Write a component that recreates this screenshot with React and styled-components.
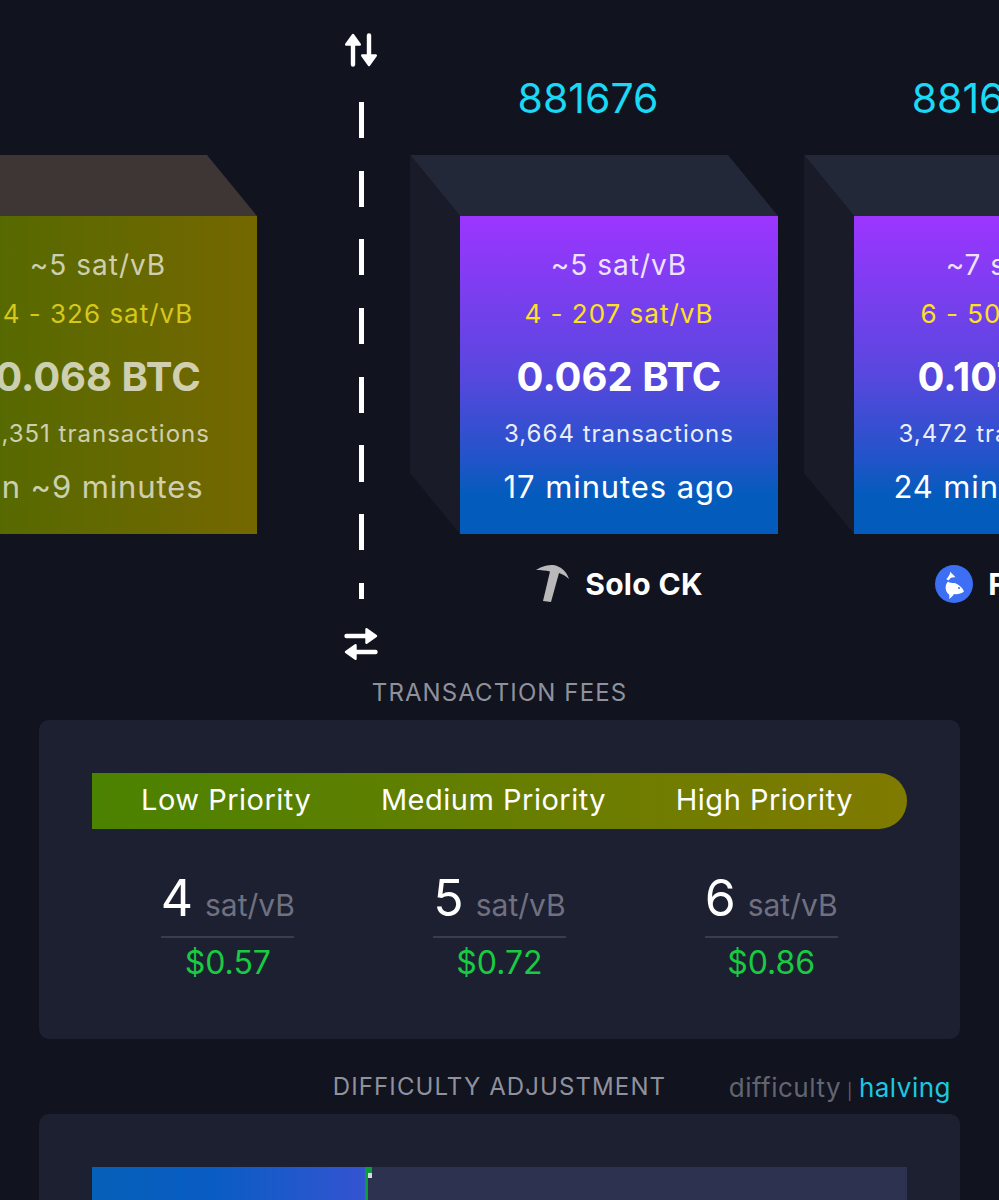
import React from 'react';
import styled, { createGlobalStyle } from 'styled-components';

const GlobalStyle = createGlobalStyle`
  html, body {
    margin: 0;
    padding: 0;
    background: #11131f;
    overflow: hidden;
  }
  body {
    font-family: Inter, "Liberation Sans", sans-serif;
    color: #fff;
  }
`;

const Page = styled.div`
  width: 999px;
  height: 1200px;
  overflow: hidden;
  background: #11131f;
`;

const Chain = styled.div`
  display: flex;
  align-items: flex-start;
  height: 678px;
  margin-left: -111px;
  width: 1600px;
`;

const BlockColumn = styled.div`
  flex: none;
  width: 368px;
  margin-right: ${p => p.$gap}px;
`;

const BlockNumber = styled.div`
  height: 155px;
  box-sizing: border-box;
  padding: 73px 12px 0 0;
  text-align: center;
  font-size: 41px;
  line-height: 50px;
  color: #1bd8f4;
`;

const Cube = styled.div`
  position: relative;
  padding: 61px 0 0 50px;

  &::before {
    content: '';
    position: absolute;
    inset: 0;
    background: ${p => (p.$pending ? '#3e3535' : '#232838')};
    clip-path: polygon(0 0, 318px 0, 368px 61px, 50px 61px);
  }

  &::after {
    content: '';
    position: absolute;
    inset: 0;
    background: #191c28;
    clip-path: polygon(0 0, 50px 61px, 50px 379px, 0 318px);
  }
`;

const Face = styled.div`
  position: relative;
  z-index: 1;
  width: 318px;
  height: 318px;
  box-sizing: border-box;
  padding-top: 29px;
  display: flex;
  flex-direction: column;
  align-items: center;
  white-space: nowrap;
  background: ${p =>
    p.$pending
      ? 'linear-gradient(to right, #4f6a00, #756700)'
      : 'linear-gradient(to bottom, #9c35ff 0%, #5548dd 52%, #2054c8 77%, #035cbc 88%, #035cbc 100%)'};
  color: ${p => (p.$pending ? 'rgba(255,255,255,0.7)' : '#fff')};
`;

const Median = styled.div`
  font-size: 28px;
  line-height: 40px;
  letter-spacing: 1px;
  opacity: ${p => (p.$pending ? 1 : 0.86)};
`;

const Range = styled.div`
  font-size: 26px;
  line-height: 40px;
  letter-spacing: 1px;
  margin-top: 9px;
  color: ${p => (p.$pending ? '#d6c71a' : '#ffe11e')};
`;

const Total = styled.div`
  font-size: 40px;
  line-height: 50px;
  font-weight: 700;
  margin-top: 18px;
`;

const TxCount = styled.div`
  font-size: 24px;
  line-height: 34px;
  letter-spacing: 1px;
  margin-top: 15px;
  opacity: ${p => (p.$pending ? 1 : 0.9)};
`;

const When = styled.div`
  font-size: 31px;
  line-height: 40px;
  letter-spacing: 0.9px;
  margin-top: 16px;
`;

const Miner = styled.div`
  margin: 28px 0 0 50px;
  width: 318px;
  height: 44px;
  display: flex;
  justify-content: center;
  align-items: center;
  gap: 15px;
  font-size: 30px;
  font-weight: 700;
  letter-spacing: 0.3px;
  white-space: nowrap;
`;

const Divider = styled.div`
  flex: none;
  width: 34px;
  margin: 33px 32px 0 87px;
  display: flex;
  flex-direction: column;
  align-items: center;
`;

const DashedLine = styled.div`
  width: 5px;
  height: 497px;
  margin: 35px 0 28px;
  background: repeating-linear-gradient(
    to bottom,
    #fff 0,
    #fff 36px,
    transparent 36px,
    transparent 68.7px
  );
`;

const SectionTitle = styled.div`
  font-size: 24px;
  line-height: 30px;
  letter-spacing: 1.1px;
  color: #8f919c;
  text-align: center;
`;

const Card = styled.div`
  margin: 12px 39px 0;
  box-sizing: border-box;
  height: ${p => p.$height}px;
  padding: 53px 53px 0;
  background: #1d2031;
  border-radius: 10px;
`;

const PriorityBar = styled.div`
  height: 56px;
  box-sizing: border-box;
  padding: 0 54px 3px 49px;
  display: flex;
  justify-content: space-between;
  align-items: center;
  font-size: 29px;
  letter-spacing: 0.5px;
  background: linear-gradient(to right, #4b8200, #807a00);
  border-radius: 0 28px 28px 0;
`;

const FeeGrid = styled.div`
  display: grid;
  grid-template-columns: repeat(3, 1fr);
  margin-top: 39px;
`;

const Fee = styled.div`
  justify-self: center;
  width: 133px;
  display: flex;
  flex-direction: column;
  align-items: center;
`;

const FeeRate = styled.div`
  width: 100%;
  box-sizing: content-box;
  display: flex;
  justify-content: center;
  align-items: baseline;
  gap: 12px;
  font-size: 50px;
  line-height: 60px;
  padding-bottom: 1px;
  border-bottom: 2px solid #3a3c50;
  white-space: nowrap;
`;

const FeeUnit = styled.span`
  font-size: 30px;
  color: #6f7180;
`;

const FeeUsd = styled.div`
  font-size: 32px;
  line-height: 46px;
  margin-top: 2px;
  color: #18cb42;
`;

const TitleRow = styled.div`
  position: relative;
  margin-top: 33px;
`;

const Switch = styled.div`
  position: absolute;
  right: 48px;
  top: 0;
  font-size: 26px;
  line-height: 32px;
  letter-spacing: 0.5px;
  color: #62646f;
  display: flex;
  align-items: baseline;
`;

const Pipe = styled.span`
  font-size: 16px;
  margin: 0 6px;
`;

const Active = styled.span`
  color: #1bc8e0;
`;

const ProgressTrack = styled.div`
  height: 60px;
  background: #2d3250;
  display: flex;
`;

const ProgressDone = styled.div`
  width: 273px;
  background: linear-gradient(to right, #0560b8, #0a5cc4 45%, #3454d1);
`;

const ProgressMark = styled.div`
  position: relative;
  width: 3px;
  background: #0f9d3c;

  &::after {
    content: '';
    position: absolute;
    top: 0;
    left: 0;
    width: 7px;
    height: 6px;
    background: #0f9d3c;
  }
`;

const ProgressTick = styled.div`
  position: absolute;
  top: 6px;
  left: 3px;
  width: 4px;
  height: 5px;
  background: #d8d8de;
  z-index: 1;
`;

const ArrowsVertical = () => (
  <svg width="34" height="34" viewBox="0 0 34 34" fill="none">
    <path d="M9 31.500V8" stroke="#fff" strokeWidth="4.4" strokeLinecap="round" />
    <path d="M2.200 11.500 9 2l6.800 9.500z" fill="#fff" stroke="#fff" strokeWidth="2.400" strokeLinejoin="round" />
    <path d="M25 2.500V26" stroke="#fff" strokeWidth="4.4" strokeLinecap="round" />
    <path d="M18.200 22.500 25 32l6.800-9.500z" fill="#fff" stroke="#fff" strokeWidth="2.400" strokeLinejoin="round" />
  </svg>
);

const ArrowsHorizontal = () => (
  <svg width="34" height="34" viewBox="0 0 34 34" fill="none">
    <path d="M2.500 9H26" stroke="#fff" strokeWidth="4.4" strokeLinecap="round" />
    <path d="M22.500 2.200 32 9l-9.500 6.800z" fill="#fff" stroke="#fff" strokeWidth="2.400" strokeLinejoin="round" />
    <path d="M31.500 25H8" stroke="#fff" strokeWidth="4.4" strokeLinecap="round" />
    <path d="M11.500 18.200 2 25l9.500 6.800z" fill="#fff" stroke="#fff" strokeWidth="2.400" strokeLinejoin="round" />
  </svg>
);

const PickIcon = () => (
  <svg width="35" height="39" viewBox="0 0 35 39">
    <path d="M1 5C7 1 13 0 18 0c8 1 14 7 16 14-3-3-7-5-10-6l-8 29-8-1 7-29.500C11 5.500 6 5 1 5z" fill="#b9b9b9" />
  </svg>
);

const FishIcon = () => (
  <svg width="38" height="38" viewBox="0 0 38 38">
    <circle cx="19" cy="19" r="19" fill="#3d6ff5" />
    <path d="M15.500 6.500C16 8.500 19 10 20.500 12.500 18 12 15.500 12.500 14 15c-1 .5-2 0-2.500-1 1.500-2 3.500-4 4-7.500z" fill="#fff" />
    <path d="M13 16.500c2.500 2.500 6 .5 9 2.500 3 1.500 6 4.500 7 7.500-3 2.500-7 3-10 2.500-1 1.500-2.500 3.500-5 5 .5-2 .5-3.500 0-4.500-3.500-2.500-5-8.500-1-13z" fill="#fff" />
    <circle cx="24" cy="23" r="1" fill="#3d6ff5" />
  </svg>
);

const blocks = [
  {
    number: '881676',
    median: '~5 sat/vB',
    range: '4 - 207 sat/vB',
    total: '0.062 BTC',
    txs: '3,664 transactions',
    when: '17 minutes ago',
    miner: 'Solo CK',
    icon: <PickIcon />,
  },
  {
    number: '881675',
    median: '~7 sat/vB',
    range: '6 - 501 sat/vB',
    total: '0.107 BTC',
    txs: '3,472 transactions',
    when: '24 minutes ago',
    miner: 'F2Pool',
    icon: <FishIcon />,
  },
];

const fees = [
  { rate: 4, usd: '$0.57' },
  { rate: 5, usd: '$0.72' },
  { rate: 6, usd: '$0.86' },
];

const BlockBody = ({ block, pending }) => (
  <Cube $pending={pending}>
    <Face $pending={pending}>
      <Median $pending={pending}>{block.median}</Median>
      <Range $pending={pending}>{block.range}</Range>
      <Total>{block.total}</Total>
      <TxCount $pending={pending}>{block.txs}</TxCount>
      <When>{block.when}</When>
    </Face>
  </Cube>
);

const App = () => (
  <Page>
    <GlobalStyle />
    <Chain>
      <BlockColumn $gap={0}>
        <BlockNumber />
        <BlockBody
          pending
          block={{
            median: '~5 sat/vB',
            range: '4 - 326 sat/vB',
            total: '0.068 BTC',
            txs: '3,351 transactions',
            when: 'In ~9 minutes',
          }}
        />
      </BlockColumn>
      <Divider>
        <ArrowsVertical />
        <DashedLine />
        <ArrowsHorizontal />
      </Divider>
      {blocks.map(block => (
        <BlockColumn key={block.number} $gap={26}>
          <BlockNumber>{block.number}</BlockNumber>
          <BlockBody block={block} />
          <Miner>
            {block.icon}
            {block.miner}
          </Miner>
        </BlockColumn>
      ))}
    </Chain>
    <SectionTitle>TRANSACTION FEES</SectionTitle>
    <Card $height={319}>
      <PriorityBar>
        <span>Low Priority</span>
        <span>Medium Priority</span>
        <span>High Priority</span>
      </PriorityBar>
      <FeeGrid>
        {fees.map(fee => (
          <Fee key={fee.rate}>
            <FeeRate>
              {fee.rate}
              <FeeUnit>sat/vB</FeeUnit>
            </FeeRate>
            <FeeUsd>{fee.usd}</FeeUsd>
          </Fee>
        ))}
      </FeeGrid>
    </Card>
    <TitleRow>
      <SectionTitle>DIFFICULTY ADJUSTMENT</SectionTitle>
      <Switch>
        difficulty<Pipe>|</Pipe><Active>halving</Active>
      </Switch>
    </TitleRow>
    <Card $height={200}>
      <ProgressTrack>
        <ProgressDone />
        <ProgressMark>
          <ProgressTick />
        </ProgressMark>
      </ProgressTrack>
    </Card>
  </Page>
);

export default App;
